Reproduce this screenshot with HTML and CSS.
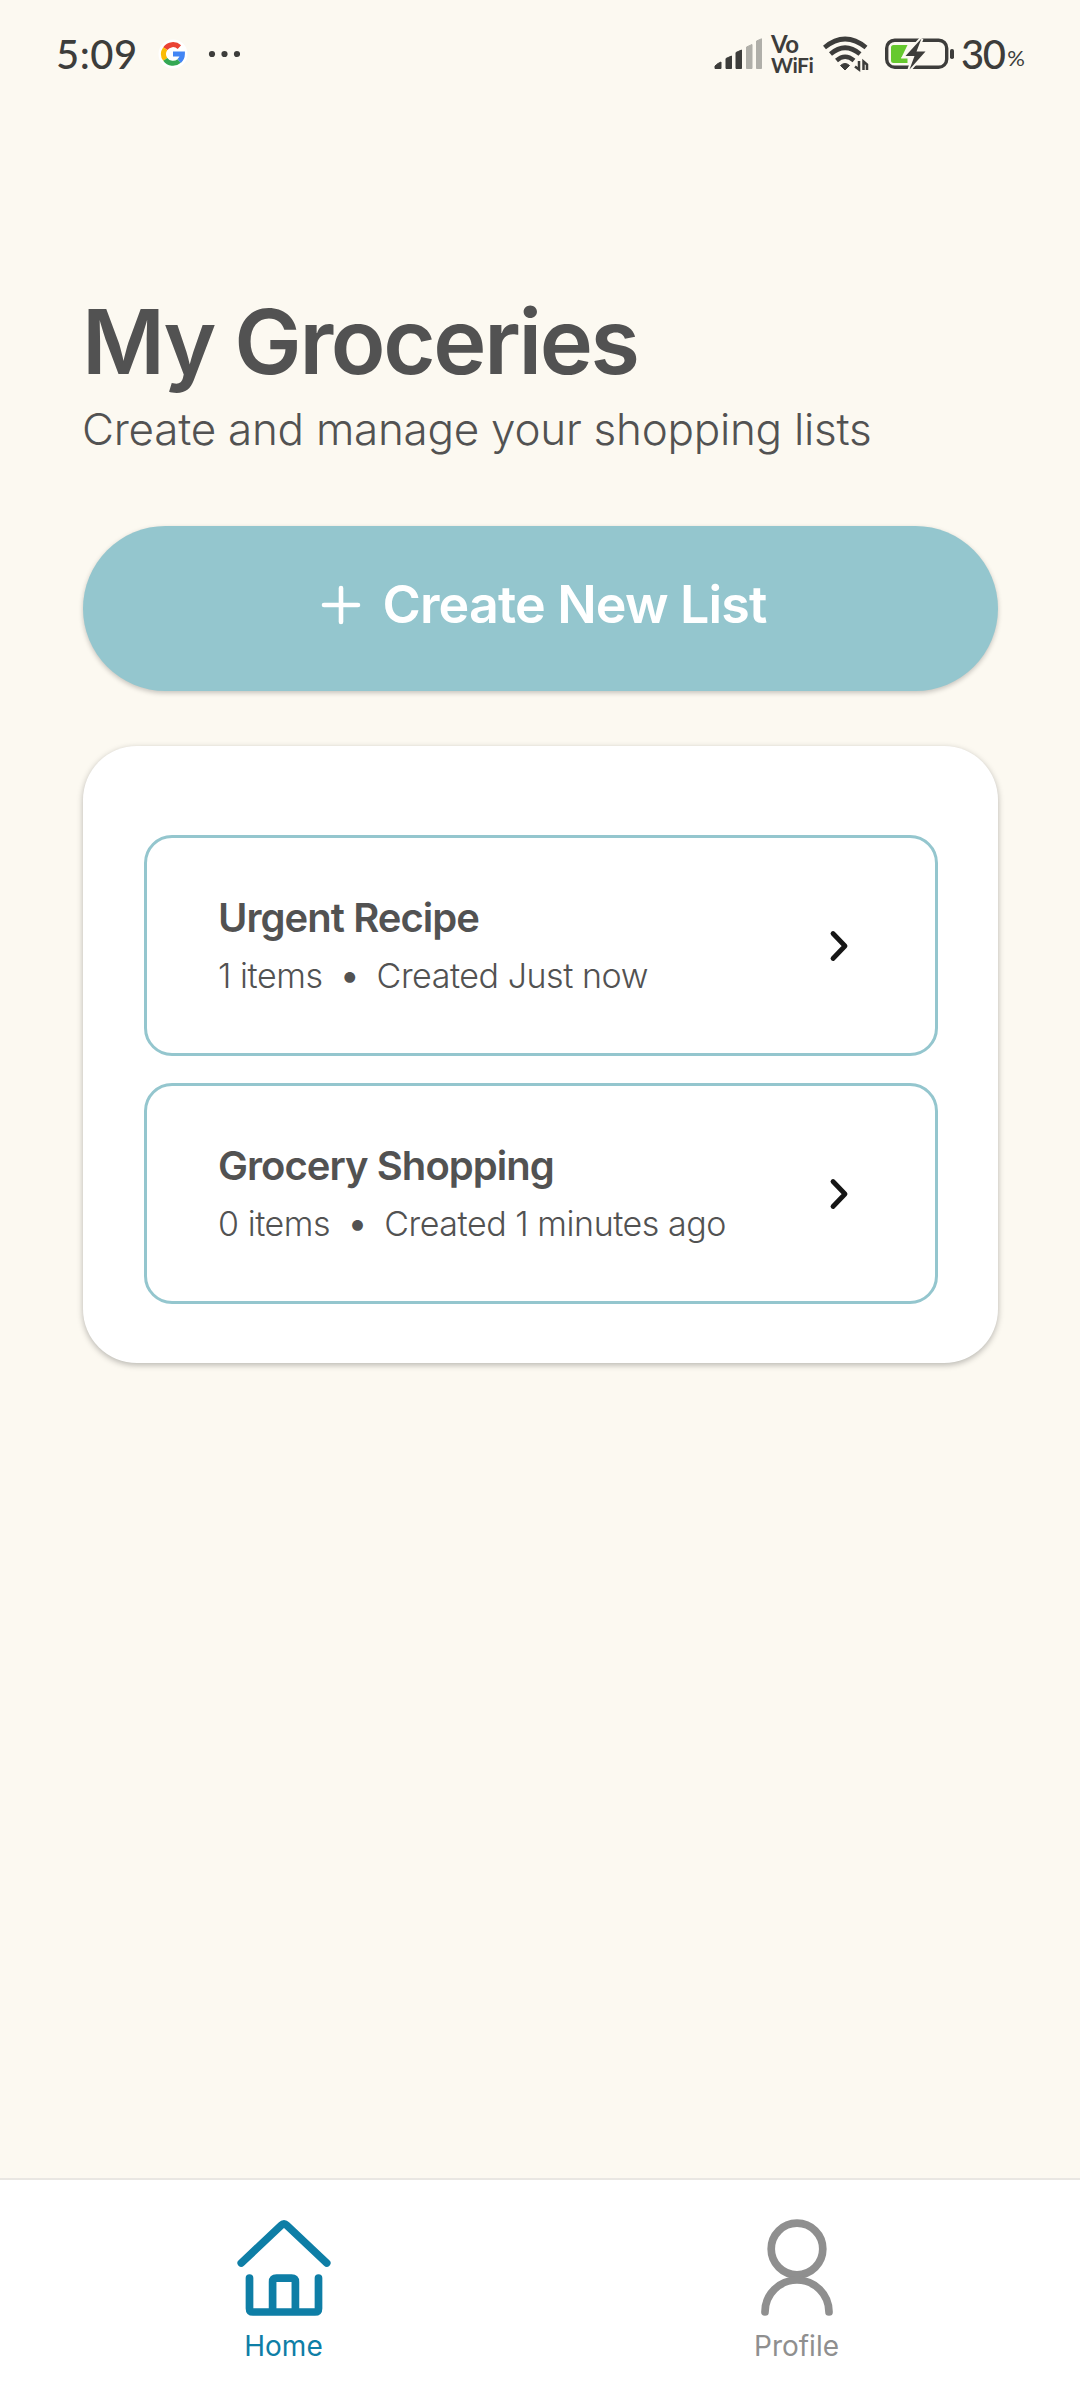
FILE: index.html
```html
<!DOCTYPE html>
<html lang="en">
<head>
<meta charset="utf-8">
<title>My Groceries</title>
<link rel="stylesheet" href="styles.css">
</head>
<body>
<div class="screen">
  <header class="status">
    <div class="status-left">
      <span class="time">5:09</span>
      <svg class="google" width="30" height="30" viewBox="0 0 30 30">
        <circle cx="15" cy="15" r="14.5" fill="#fff"/>
        <g fill="none" stroke-width="5">
          <path d="M7.3 9.6A9.4 9.4 0 0 1 21.4 8.1" stroke="#ea4335"/>
          <path d="M7.3 20.4A9.4 9.4 0 0 1 7.3 9.6" stroke="#fbbc05"/>
          <path d="M21.2 22A9.4 9.4 0 0 1 7.3 20.4" stroke="#34a853"/>
          <path d="M15 15H24.4A9.4 9.4 0 0 1 21.2 22" stroke="#4285f4"/>
        </g>
      </svg>
      <svg class="more" width="32" height="8" viewBox="0 0 32 8" fill="#3d3d3b">
        <circle cx="4" cy="4" r="3.1"/><circle cx="16.5" cy="4" r="3.1"/><circle cx="29" cy="4" r="3.1"/>
      </svg>
    </div>
    <div class="status-right">
      <svg class="signal" width="50" height="32" viewBox="0 0 50 32" fill="#3d3d3b" stroke="#3d3d3b" stroke-linejoin="round">
        <path d="M1 30.500V28Q4 25 7 24V30.500Z"/>
        <path d="M12 30.500V20.500L17.500 18V30.500Z"/>
        <path d="M22 30.500V14.500L27.500 12V30.500Z"/>
        <path d="M32.500 30.500V9L38 6.500V30.500Z" fill="#b0afa9" stroke="#b0afa9"/>
        <path d="M42.500 30.500V3L47.500 0.800V30.500Z" fill="#b0afa9" stroke="#b0afa9"/>
      </svg>
      <div class="vowifi"><span class="vo">Vo</span><span>WiFi</span></div>
      <svg class="wifi" width="48" height="36" viewBox="0 0 48 36" fill="none" stroke="#3d3d3b">
        <path d="M2.500 11.500Q23 -5.500 44 11.500" stroke-width="4.600"/>
        <path d="M8.500 18Q23 5.500 38 18" stroke-width="4.600"/>
        <path d="M14.500 24.500Q23 17 32 24.500" stroke-width="4.400"/>
        <path d="M18.500 29.500Q23 25.500 27.500 29.500L23 34Z" fill="#3d3d3b" stroke="#3d3d3b" stroke-linejoin="round"/>
        <path d="M37 25V33.500L33 30.500M41.500 34V25.500L45 28.500V34" stroke-width="2.500"/>
      </svg>
      <svg class="battery" width="72" height="36" viewBox="0 0 72 36">
        <rect x="2.700" y="4.200" width="60" height="27" rx="8" fill="none" stroke="#3d3d3b" stroke-width="3.400"/>
        <path d="M9.500 9H23.500L17 22.500H23.500V27H9.500Q7 27 7 24.500V11.500Q7 9 9.500 9Z" fill="#66c92e"/>
        <path d="M37.500 2.500L21.500 20H30.500L25.500 33.500L41.500 15.500H32.500Z" fill="#3d3d3b" stroke="#fcf9f1" stroke-width="4" paint-order="stroke"/>
        <rect x="66" y="13" width="4" height="10" rx="1.800" fill="#3d3d3b"/>
      </svg>
      <span class="level">30</span><span class="percent">%</span>
    </div>
  </header>

  <main class="content">
    <h1 class="title">My Groceries</h1>
    <p class="subtitle">Create and manage your shopping lists</p>

    <button class="create" type="button">
      <svg width="40" height="40" viewBox="0 0 40 40" fill="none" stroke="#fff" stroke-width="4.600" stroke-linecap="round"><path d="M20 3V37M3 20H37"/></svg>
      <span>Create New List</span>
    </button>

    <section class="lists">
      <article class="item">
        <div class="item-text">
          <h2 class="item-name">Urgent Recipe</h2>
          <p class="item-meta"><span>1 items</span><span class="dot">•</span><span>Created Just now</span></p>
        </div>
        <svg class="chevron" width="20" height="34" viewBox="0 0 20 34"><path d="M4 4.500L16 17L4 29.500"/></svg>
      </article>
      <article class="item">
        <div class="item-text">
          <h2 class="item-name">Grocery Shopping</h2>
          <p class="item-meta"><span>0 items</span><span class="dot">•</span><span>Created 1 minutes ago</span></p>
        </div>
        <svg class="chevron" width="20" height="34" viewBox="0 0 20 34"><path d="M4 4.500L16 17L4 29.500"/></svg>
      </article>
    </section>
  </main>

  <nav class="tabs">
    <a class="tab active">
      <svg width="98" height="100" viewBox="0 0 98 100"><path d="M6.300 45L46 7.500Q49 4.500 52 7.500L91.700 45M14.500 60V90.500Q14.500 94 18 94H80Q83.500 94 83.500 90.500V60M37.600 94V64Q37.600 60.200 41.500 60.200H56.500Q60.400 60.200 60.400 64V94"/></svg>
      <span>Home</span>
    </a>
    <a class="tab">
      <svg width="98" height="100" viewBox="0 0 98 100"><circle cx="49" cy="31" r="25.800"/><path d="M17 94A32 32 0 0 1 81 94"/></svg>
      <span>Profile</span>
    </a>
  </nav>
</div>
</body>
</html>
```
FILE: styles.css
```css
* { box-sizing: border-box; margin: 0; padding: 0; }

body {
  background: #fcf9f1;
  color: #525252;
  font-family: Inter, "Liberation Sans", sans-serif;
}

svg { display: block; flex: none; }

.screen {
  display: flex;
  flex-direction: column;
  width: 1080px;
  height: 2400px;
}

/* Status bar */
.status {
  display: flex;
  justify-content: space-between;
  height: 108px;
  padding: 0 55px 0 56px;
  color: #3d3d3b;
  font-family: Lato, "Liberation Sans", sans-serif;
  line-height: 108px;
}
.status-left, .status-right { display: flex; align-items: center; }
.time { width: 102px; font-size: 40px; font-weight: 500; letter-spacing: 0.5px; }
.more { margin-left: 20px; }
.signal { margin-right: 7px; }
.vowifi {
  display: flex;
  flex-direction: column;
  width: 51px;
  font: 700 21px/21px Lato, sans-serif;
  letter-spacing: -0.500px;
}
.vo { font-size: 24px; }
.battery { margin: 0 5px 0 14px; }
.level { font-size: 40px; font-weight: 500; letter-spacing: -1.500px; }
.percent { margin-left: 3px; padding-top: 8px; font-size: 22px; }

/* Page */
.content { flex: 1; padding: 184px 82px 0 83px; }
.title {
  margin-left: -1px;
  font-size: 90px;
  font-weight: 600;
  line-height: 100px;
  letter-spacing: -2.350px;
}
.subtitle {
  margin: 9px 0 69px -1px;
  font-size: 44px;
  font-weight: 300;
  line-height: 56px;
  letter-spacing: -0.260px;
}

.create {
  display: flex;
  align-items: center;
  justify-content: center;
  gap: 21px;
  width: 100%;
  height: 165px;
  padding: 0 0 8px 7px;
  border: 0;
  border-radius: 83px;
  background: #94c6ce;
  box-shadow: 0 2px 5px rgba(0, 0, 0, 0.22);
  color: #fff;
  font: 600 52px/1 Inter, sans-serif;
  letter-spacing: -0.850px;
}

.lists {
  display: flex;
  flex-direction: column;
  gap: 27px;
  height: 617px;
  margin-top: 55px;
  padding: 89px 60px 0 61px;
  border-radius: 54px;
  background: #fff;
  box-shadow: 0 2px 6px rgba(0, 0, 0, 0.28);
}
.item {
  display: flex;
  align-items: center;
  justify-content: space-between;
  height: 221px;
  padding: 0 86px 0 71px;
  border: 3px solid #94c6ce;
  border-radius: 28px;
}
.item-text { padding-bottom: 1px; }
.item-name {
  font-size: 40px;
  font-weight: 600;
  line-height: 50px;
  letter-spacing: -0.950px;
}
.item-meta {
  display: flex;
  gap: 16px;
  margin-top: 11px;
  font-size: 34px;
  font-weight: 300;
  line-height: 44px;
  letter-spacing: -0.450px;
}
.dot { font-size: 40px; line-height: 42px; }
.chevron { fill: none; stroke: #161616; stroke-width: 4.800; stroke-linecap: round; stroke-linejoin: round; }

/* Bottom navigation */
.tabs {
  display: flex;
  height: 222px;
  padding: 38px 27px 0;
  border-top: 2px solid #e9e7e3;
  background: #fff;
}
.tab {
  display: flex;
  flex: 1;
  flex-direction: column;
  align-items: center;
  gap: 11px;
  color: #8f8f8f;
  font-size: 28px;
  line-height: 34px;
}
.tab svg { fill: none; stroke: currentColor; stroke-width: 7.700; stroke-linecap: round; }
.tab.active { color: #0e7ea6; }
```
